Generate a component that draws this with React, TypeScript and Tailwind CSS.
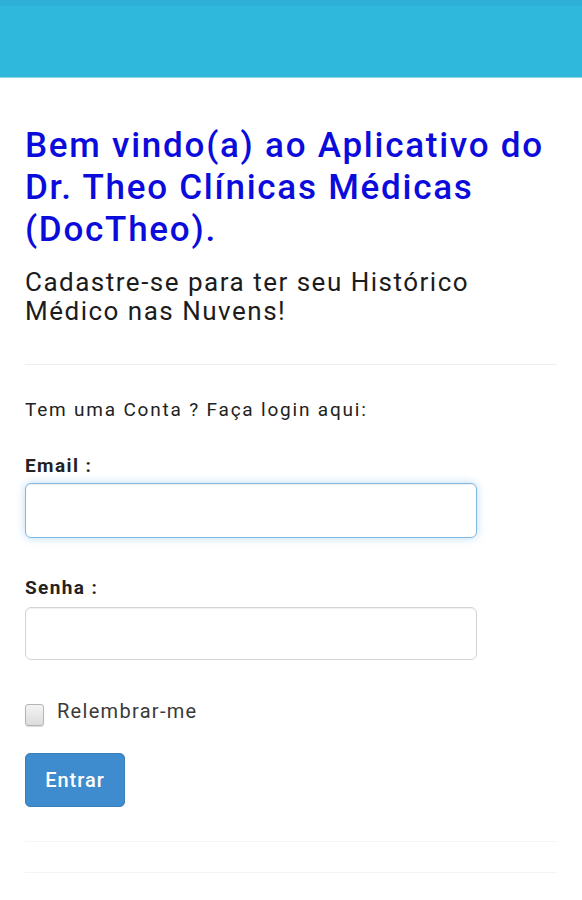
import { useState } from "react";

export default function App() {
  const [remember, setRemember] = useState(false);

  return (
    <div className="min-h-[900px] bg-white font-['Roboto',sans-serif]">
      {/* Top bar */}
      <header className="h-[78px] bg-[#2fb7dc] border-t-[6px] border-[#2eafd8] border-b border-b-[#8fd6ea]" />

      <main className="px-[25px]">
        <h1 className="mt-[47px] text-[35px] leading-[42px] tracking-[1.75px] text-[#0b0bdc] font-medium">
          Bem vindo(a) ao Aplicativo do Dr. Theo Clínicas Médicas (DocTheo).
        </h1>
        <p className="mt-[17px] text-[26px] leading-[29px] tracking-[1.5px] text-[#1c1c1c]">
          Cadastre-se para ter seu Histórico Médico nas Nuvens!
        </p>

        <hr className="mt-[38px] border-t border-[#eeeeee]" />

        <form className="flex flex-col" onSubmit={(e) => e.preventDefault()}>
          <p className="mt-[32px] text-[19px] leading-[25px] tracking-[1.8px] text-[#222]">
            Tem uma Conta ? Faça login aqui:
          </p>

          <label className="mt-[31px] text-[19px] leading-[25px] tracking-[1.4px] font-bold text-[#222]">
            Email :
          </label>
          <input
            type="email"
            className="mt-[5px] w-[452px] h-[55px] rounded-[6px] border border-[#7fb9e0] bg-white px-3 text-lg outline-none shadow-[0_0_8px_rgba(102,175,233,0.45),inset_0_1px_1px_rgba(0,0,0,0.06)]"
          />

          <label className="mt-[37px] text-[19px] leading-[25px] tracking-[1.4px] font-bold text-[#222]">
            Senha :
          </label>
          <input
            type="password"
            className="mt-[7px] w-[452px] h-[53px] rounded-[6px] border border-[#d4d4d4] bg-white px-3 text-lg outline-none shadow-[inset_0_1px_1px_rgba(0,0,0,0.06)]"
          />

          <label className="mt-[40px] flex items-start gap-[13px] cursor-pointer">
            <span
              onClick={() => setRemember(!remember)}
              className="mt-[4px] w-[19px] h-[22px] rounded-[3px] border border-[#b5b5b5] bg-gradient-to-b from-[#f4f4f4] to-[#dcdcdc] shadow-[0_1px_1px_rgba(0,0,0,0.15)] flex items-center justify-center text-[14px] text-[#333]"
            >
              {remember ? "✓" : ""}
            </span>
            <span className="text-[20px] leading-[22px] tracking-[1.3px] text-[#3a3a3a]">Relembrar-me</span>
          </label>

          <div className="mt-[27px]">
            <button
              type="submit"
              className="w-[100px] h-[54px] rounded-[5px] bg-[#3e8bcd] border border-[#3a80bd] text-white text-[20px] tracking-[1px] font-medium"
            >
              Entrar
            </button>
          </div>
        </form>

        <hr className="mt-[34px] border-t border-[#f5f5f5]" />
        <hr className="mt-[30px] border-t border-[#f3f3f3]" />
      </main>
    </div>
  );
}
